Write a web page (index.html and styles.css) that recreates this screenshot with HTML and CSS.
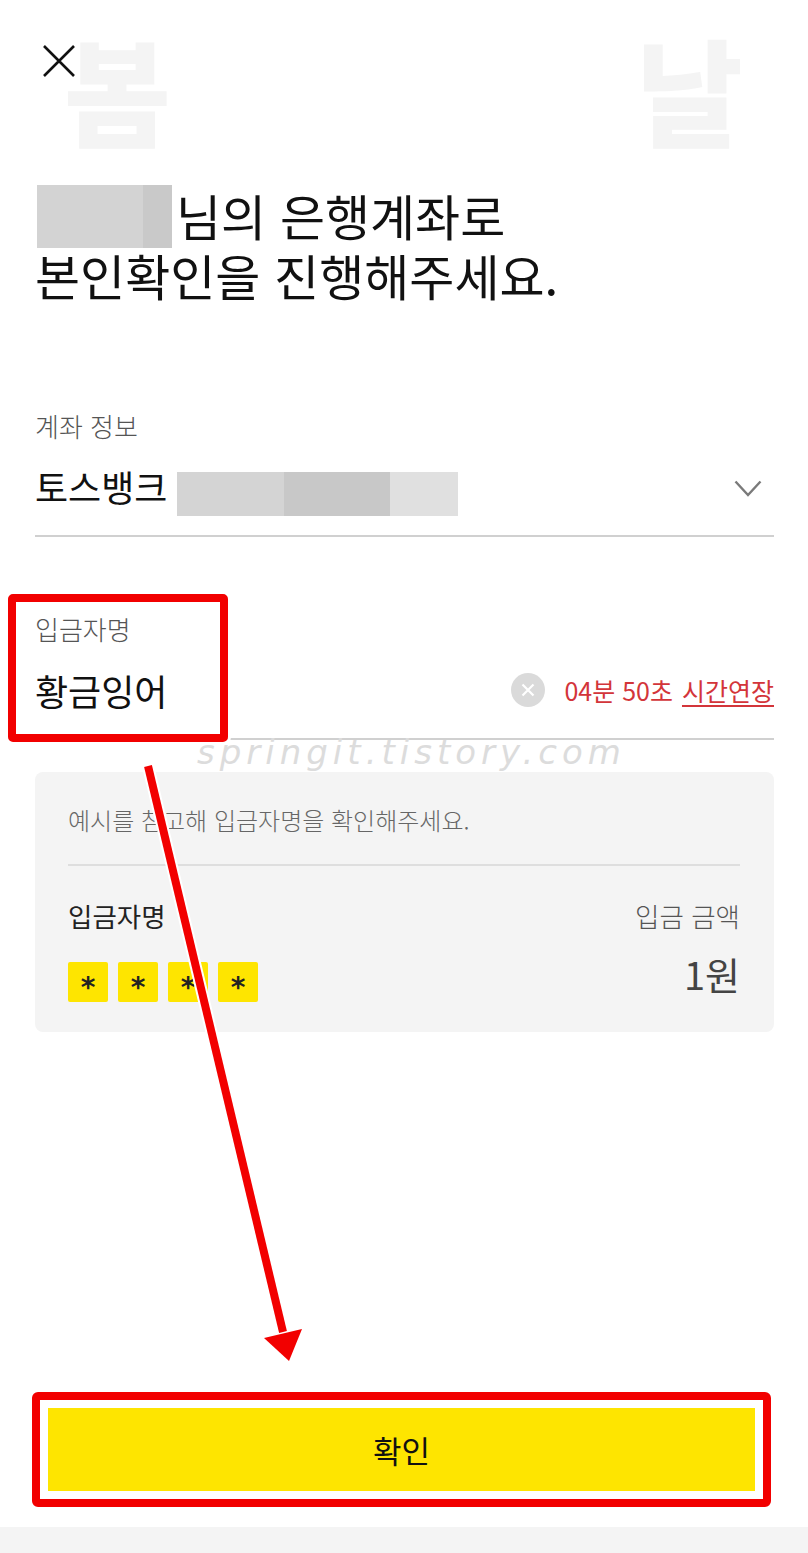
FILE: index.html
```html
<!DOCTYPE html>
<html lang="ko">
<head>
<meta charset="utf-8">
<link rel="stylesheet" href="styles.css">
</head>
<body>
<div class="screen">
    <span class="wm wm-left">봄</span>
    <span class="wm wm-right">날</span>

    <header class="top">
        <button class="close" aria-label="닫기">
            <svg width="32" height="32" viewBox="0 0 32 32"><path d="M1 1 L31 31 M31 1 L1 31" stroke="#111" stroke-width="2.6" fill="none"/></svg>
        </button>
    </header>

    <main class="content">
        <h1 class="title"><span class="mask mask-name"></span>님의 은행계좌로<br>본인확인을 진행해주세요.</h1>

        <section class="field field-account">
            <div class="label">계좌 정보</div>
            <div class="row">
                <span class="value">토스뱅크</span>
                <span class="mask mask-account"><i></i><i></i><i></i></span>
                <svg class="chevron" width="28" height="17" viewBox="0 0 28 17"><path d="M1.5 1.5 L14 15 L26.5 1.5" stroke="#7a7a7a" stroke-width="2.4" fill="none"/></svg>
            </div>
        </section>

        <section class="field field-name">
            <div class="highlight"></div>
            <div class="label">입금자명</div>
            <div class="row">
                <span class="value">황금잉어</span>
                <div class="tools">
                    <span class="clear"><svg width="34" height="34" viewBox="0 0 34 34"><circle cx="17" cy="17" r="17" fill="#dadada"/><path d="M11.5 11.5 L22.5 22.5 M22.5 11.5 L11.5 22.5" stroke="#fff" stroke-width="2.2"/></svg></span>
                    <span class="timer">04분 50초</span>
                    <a class="extend">시간연장</a>
                </div>
            </div>
            <div class="watermark">springit.tistory.com</div>
        </section>

        <section class="example">
            <p class="hint">예시를 참고해 입금자명을 확인해주세요.</p>
            <div class="example-grid">
                <div class="col">
                    <div class="ex-label">입금자명</div>
                    <div class="stars"><span>*</span><span>*</span><span>*</span><span>*</span></div>
                </div>
                <div class="col col-right">
                    <div class="ex-label ex-label-gray">입금 금액</div>
                    <div class="amount">1원</div>
                </div>
            </div>
        </section>
    </main>

    <footer class="bottom">
        <div class="btn-frame">
            <button class="confirm">확인</button>
        </div>
    </footer>
    <div class="bar"></div>

    <svg class="arrow" width="808" height="1553" viewBox="0 0 808 1553">
        <line x1="148" y1="766" x2="283" y2="1332" stroke="#fff" stroke-width="12"/>
        <polygon points="263,1338 303,1328 289,1362" fill="#fff" stroke="#fff" stroke-width="4" stroke-linejoin="round"/>
        <line x1="148" y1="766" x2="283" y2="1332" stroke="#f20000" stroke-width="8"/>
        <polygon points="264,1338 302,1329 289,1361" fill="#f20000"/>
    </svg>
</div>
</body>
</html>
```

FILE: styles.css
```css
* {
    box-sizing: border-box;
}

body {
    margin: 0;
    background: #fff;
    font-family: "Noto Sans CJK KR", "Noto Sans", sans-serif;
    color: #111;
}

.screen {
    position: relative;
    width: 808px;
    height: 1553px;
    display: flex;
    flex-direction: column;
    overflow: hidden;
}

/* faint background letters */
.wm {
    position: absolute;
    top: 18px;
    font-size: 116px;
    font-weight: 900;
    line-height: 1.2;
    color: #f4f4f4;
}

.wm-left {
    left: 64px;
}

.wm-right {
    left: 636px;
}

.top {
    position: relative;
    height: 185px;
    padding: 45px 0 0 43px;
}

.close {
    display: block;
    width: 32px;
    height: 32px;
    padding: 0;
    border: 0;
    background: none;
}

.close svg {
    display: block;
}

.content {
    position: relative;
    padding: 0 34px 0 35px;
}

.title {
    margin: 0;
    font-size: 49px;
    font-weight: 400;
    line-height: 60px;
}

.mask {
    display: inline-block;
}

.mask-name {
    width: 135px;
    height: 63px;
    margin: 0 4px -3px 2px;
    vertical-align: top;
    background: linear-gradient(to right, #d3d3d3 0, #d3d3d3 106px, #c9c9c9 106px);
}

.field {
    position: relative;
    border-bottom: 2px solid #d0d0d0;
}

.field-account {
    margin-top: 104px;
    padding-bottom: 19px;
}

.field-name {
    margin-top: 75px;
    padding-bottom: 24px;
}

.label {
    font-size: 26px;
    font-weight: 300;
    line-height: 34px;
    color: #555;
}

.row {
    display: flex;
    align-items: flex-start;
    margin-top: 19px;
}

.value {
    font-size: 36px;
    line-height: 48px;
}

.mask-account {
    display: flex;
    width: 281px;
    height: 44px;
    margin: 10px 0 0 10px;
}

.mask-account i {
    flex: 1;
    background: #d4d4d4;
}

.mask-account i:nth-child(2) {
    background: #c8c8c8;
}

.mask-account i:nth-child(3) {
    flex: 0 0 68px;
    background: #e0e0e0;
}

.chevron {
    margin: 18px 12px 0 auto;
}

.highlight {
    position: absolute;
    top: -18px;
    left: -27px;
    width: 220px;
    height: 148px;
    border: 8px solid #f20000;
    border-radius: 5px;
    box-shadow: 0 0 0 3px #fff;
    z-index: 2;
}

.field-name .row {
    align-items: center;
    height: 48px;
    margin-top: 20px;
}

.tools {
    display: flex;
    align-items: center;
    margin-left: auto;
    font-size: 25px;
    color: #d3353a;
}

.clear {
    display: flex;
    margin-right: 19px;
}

.extend {
    margin-left: 9px;
    text-decoration: underline;
    text-underline-offset: 4px;
}

.watermark {
    position: absolute;
    left: 162px;
    top: 120px;
    font-family: "DejaVu Sans", sans-serif;
    font-size: 34px;
    font-style: italic;
    font-weight: 200;
    letter-spacing: 5px;
    color: #dcdcdc;
    line-height: 40px;
}

.example {
    margin-top: 32px;
    padding: 32px 34px 30px 33px;
    background: #f4f4f4;
    border-radius: 8px;
}

.hint {
    margin: 0;
    padding-bottom: 28px;
    border-bottom: 2px solid #dedede;
    font-size: 24px;
    font-weight: 300;
    line-height: 32px;
    color: #666;
}

.example-grid {
    display: flex;
    justify-content: space-between;
    margin-top: 33px;
}

.col-right {
    text-align: right;
}

.ex-label {
    font-size: 26.5px;
    line-height: 34px;
    color: #222;
}

.ex-label-gray {
    font-weight: 300;
    color: #555;
}

.stars {
    display: flex;
    gap: 10px;
    margin-top: 29px;
}

.stars span {
    width: 40px;
    height: 40px;
    border-radius: 2px;
    background: #fee500;
    font-family: "DejaVu Sans", sans-serif;
    font-size: 28px;
    font-weight: 700;
    line-height: 52px;
    text-align: center;
    color: #222;
}

.amount {
    margin-top: 19px;
    font-size: 38px;
    line-height: 44px;
    color: #444;
}

.bottom {
    margin-top: auto;
    padding: 0 37px 20px 32px;
}

.btn-frame {
    padding: 8px;
    border: 8px solid #f20000;
    border-radius: 6px;
    background: #fff;
}

.confirm {
    display: block;
    width: 100%;
    height: 83px;
    border: 0;
    background: #fee500;
    font-family: "Noto Sans CJK KR", sans-serif;
    font-size: 31px;
    color: #111;
}

.bar {
    height: 26px;
    background: #f4f4f4;
}

.arrow {
    position: absolute;
    top: 0;
    left: 0;
    pointer-events: none;
}
```
